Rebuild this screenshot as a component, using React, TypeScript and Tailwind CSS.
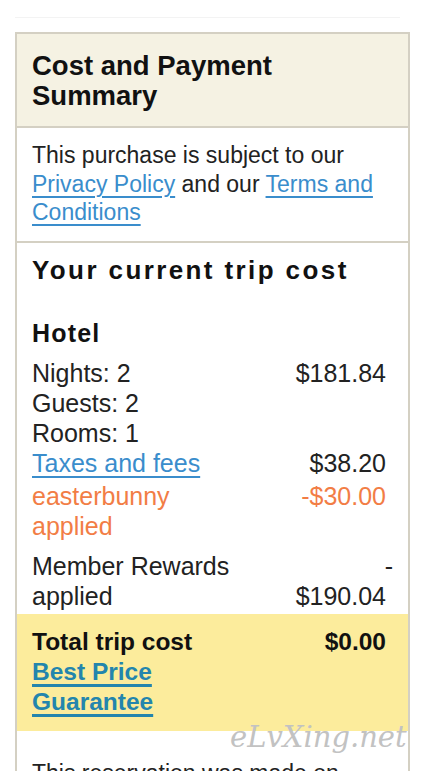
export default function App() {
  return (
    <div className="relative h-[771px] w-[436px] overflow-hidden bg-white font-['Liberation_Sans',Arial,sans-serif] text-[#222]">
      <div className="pt-[17px] pl-[15px]">
        <div className="h-px w-[385px] bg-[#f3f3f3]" />
        <div className="mt-[14px] w-[395px] border-2 border-b-0 border-[#d4d0c3]">
          {/* Header */}
          <div className="border-b-2 border-[#d4d0c3] bg-[#f5f2e3] px-[15px] pt-[17px] pb-[15px]">
            <h2 className="text-[27.5px] leading-[30px] font-bold text-[#111]">
              Cost and Payment
              <br />
              Summary
            </h2>
          </div>

          {/* Policy */}
          <div className="border-b-2 border-[#d4d0c3] px-[15px] pt-[13px] pb-[14px]">
            <p className="text-[23px] leading-[28.5px]">
              This purchase is subject to our{" "}
              <a className="text-[#3a8dcc] underline decoration-2 underline-offset-[4px]">
                Privacy Policy
              </a>{" "}
              and our{" "}
              <a className="text-[#3a8dcc] underline decoration-2 underline-offset-[4px]">
                Terms and Conditions
              </a>
            </p>
          </div>

          {/* Trip cost */}
          <div className="pt-[12px]">
            <h3 className="px-[15px] text-[26px] leading-[30px] font-bold tracking-[2.4px] text-[#111]">
              Your current trip cost
            </h3>
            <h4 className="mt-[33px] px-[15px] text-[25px] leading-[30px] font-bold tracking-[1.2px] text-[#111]">
              Hotel
            </h4>

            <div className="mt-[10px] grid grid-cols-[205px_1fr] px-[15px] text-[25px] leading-[30px]">
              <div>
                Nights: 2
                <br />
                Guests: 2
                <br />
                Rooms: 1
              </div>
              <div className="pr-[7px] text-right">$181.84</div>

              <div>
                <a className="text-[#3a8dcc] underline decoration-2 underline-offset-[4px]">
                  Taxes and fees
                </a>
              </div>
              <div className="pr-[7px] text-right">$38.20</div>

              <div className="mt-[3px] text-[#f27d45]">easterbunny applied</div>
              <div className="mt-[3px] pr-[7px] text-right text-[#f27d45]">-$30.00</div>

              <div className="mt-[10px]">Member Rewards applied</div>
              <div className="mt-[10px] flex flex-col items-end">
                <span>-</span>
                <span className="pr-[7px]">$190.04</span>
              </div>
            </div>

            {/* Total */}
            <div className="mt-[3px] grid grid-cols-[205px_1fr] bg-[#fcec9c] px-[15px] pt-[13px] pb-[14px] text-[24.5px] leading-[30px] font-bold">
              <div>
                <div className="text-[#111]">Total trip cost</div>
                <a className="text-[#2385ad] underline decoration-[3px] underline-offset-[4px]">
                  Best Price Guarantee
                </a>
              </div>
              <div className="pr-[7px] text-right text-[#111]">$0.00</div>
            </div>

            <p className="px-[15px] pt-[28px] pb-[20px] text-[23px] leading-[28.5px]">
              This reservation was made on Wednesday, March 31, 2010.
            </p>
          </div>
        </div>
      </div>

      {/* watermark */}
      <div className="pointer-events-none absolute top-[716px] left-[230px] font-['DejaVu_Serif',serif] text-[29px] italic text-[#c2c2c2]">
        eLvXing.net
      </div>
    </div>
  );
}
